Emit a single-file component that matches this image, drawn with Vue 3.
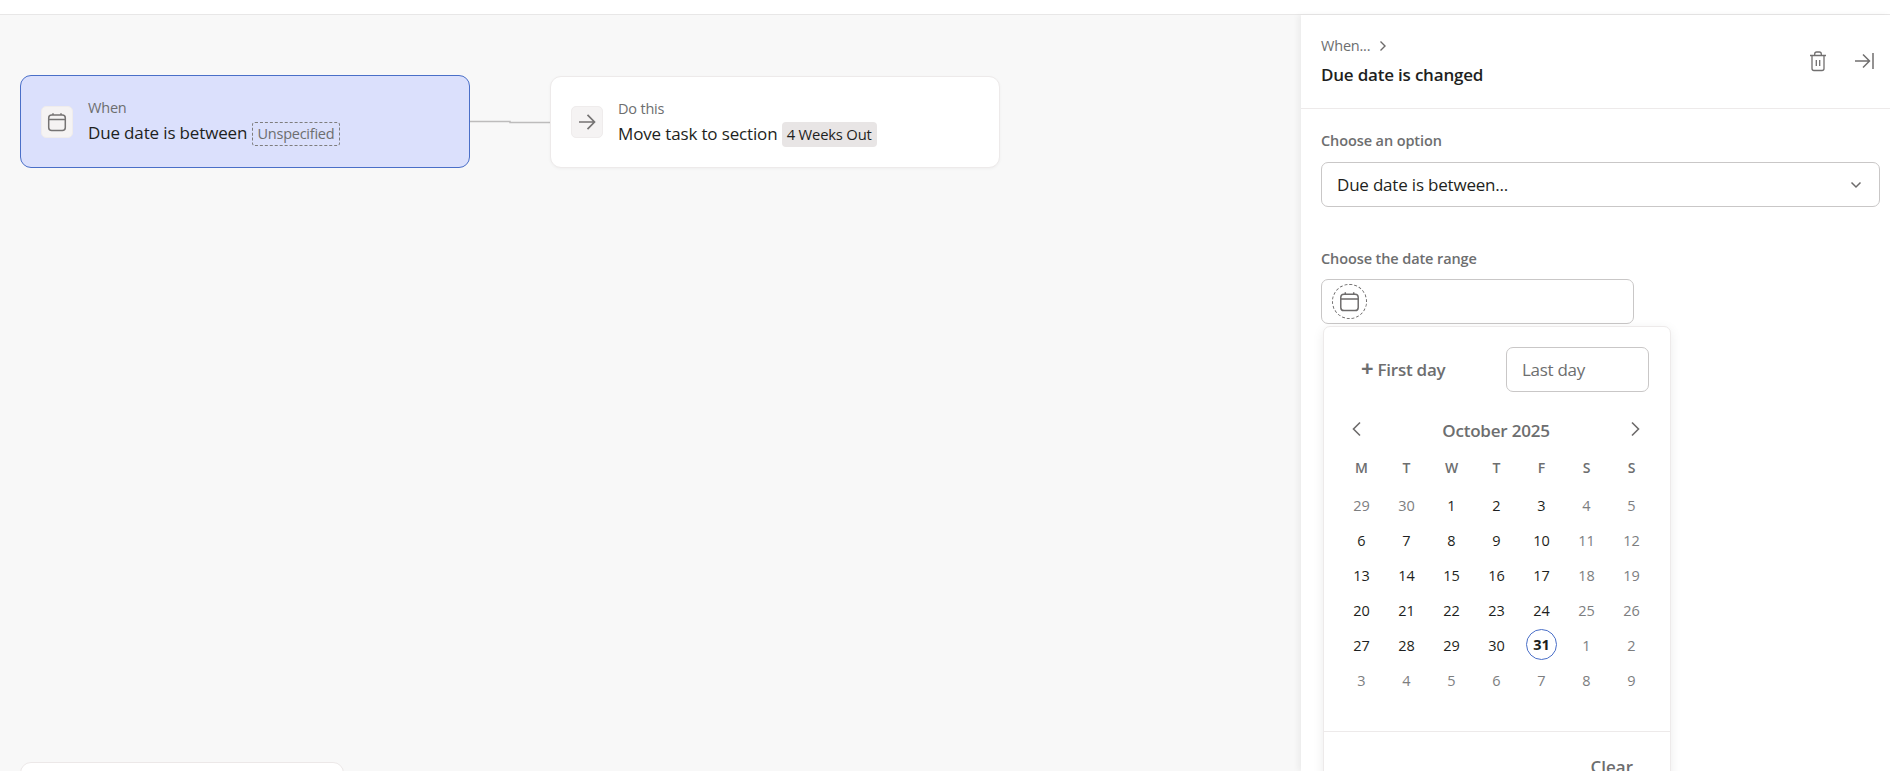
<script setup>
const weekdays = ['M', 'T', 'W', 'T', 'F', 'S', 'S']
const muted = (i) => i < 2 || i > 32 || (i + 1) % 7 === 6 || (i + 1) % 7 === 0
const seq = [29, 30, ...Array.from({ length: 31 }, (_, i) => i + 1), 1, 2, 3, 4, 5, 6, 7, 8, 9]
const days = seq.map((n, i) => ({ n, muted: muted(i), today: i === 32 }))
</script>

<template>
  <div class="page">
    <div class="topbar"></div>
    <div class="main">
      <section class="canvas">
        <svg class="wire" width="80" height="4" viewBox="0 0 80 4">
          <path d="M0 1.5H40V2.5H80" fill="none" stroke="#bdbcbc" stroke-width="1.5" />
        </svg>
        <div class="node when">
          <span class="tile">
            <svg width="20" height="20" viewBox="0 0 20 20" fill="none" stroke="#757373" stroke-width="1.5">
              <rect x="1.7" y="3" width="16.6" height="15.6" rx="3" />
              <path d="M1.7 7.6H18.3M6 1.3V3M14 1.3V3" />
            </svg>
          </span>
          <div class="node-text">
            <div class="eyebrow">When</div>
            <div class="line">Due date is between <span class="dashed">Unspecified</span></div>
          </div>
        </div>
        <div class="node action">
          <span class="tile">
            <svg width="20" height="20" viewBox="0 0 20 20" fill="none" stroke="#757373" stroke-width="1.7">
              <path d="M2 10H17.5M10.5 2.8L17.5 10L10.5 17.2" />
            </svg>
          </span>
          <div class="node-text">
            <div class="eyebrow">Do this</div>
            <div class="line">Move task to section <span class="chip">4 Weeks Out</span></div>
          </div>
        </div>
        <div class="node stub"></div>
      </section>

      <aside class="panel">
        <header class="head">
          <div>
            <div class="crumb">When...
              <svg width="10" height="12" viewBox="0 0 10 12" fill="none" stroke="#6d6b6b" stroke-width="1.4">
                <path d="M2.5 1.5L7 6L2.5 10.5" />
              </svg>
            </div>
            <div class="title">Due date is changed</div>
          </div>
          <div class="actions">
            <svg width="18" height="21" viewBox="0 0 18 21" fill="none" stroke="#716f6f" stroke-width="1.3">
              <path d="M1 4.5H17M3 4.5V17.5A2 2 0 0 0 5 19.5H13A2 2 0 0 0 15 17.5V4.5M5.7 4.5V3A2 2 0 0 1 7.7 1H10.3A2 2 0 0 1 12.3 3V4.5M7.3 9V15M10.7 9V15" />
            </svg>
            <svg width="19" height="18" viewBox="0 0 19 18" fill="none" stroke="#716f6f" stroke-width="1.5">
              <path d="M0 9H14.5M8 2.5L14.5 9L8 15.5M18 1V17" />
            </svg>
          </div>
        </header>

        <div class="body">
          <div class="label">Choose an option</div>
          <div class="select">
            <span>Due date is between...</span>
            <svg width="12" height="8" viewBox="0 0 12 8" fill="none" stroke="#6d6b6b" stroke-width="1.5">
              <path d="M1.5 1.5L6 6L10.5 1.5" />
            </svg>
          </div>

          <div class="label second">Choose the date range</div>
          <div class="date-field">
            <span class="date-ring">
              <svg width="21" height="21" viewBox="0 0 20 20" fill="none" stroke="#6d6b6b" stroke-width="1.4">
                <rect x="1.7" y="3" width="16.6" height="15.6" rx="3" />
                <path d="M1.7 7.6H18.3M6 1.3V3M14 1.3V3" />
              </svg>
            </span>
          </div>

          <div class="popover">
            <div class="range">
              <div class="first"><span class="plus">+</span> First day</div>
              <div class="last">Last day</div>
            </div>
            <div class="month">
              <svg width="12" height="16" viewBox="0 0 12 16" fill="none" stroke="#6d6b6b" stroke-width="1.6">
                <path d="M9 1.5L2.5 8L9 14.5" />
              </svg>
              <span>October 2025</span>
              <svg width="12" height="16" viewBox="0 0 12 16" fill="none" stroke="#6d6b6b" stroke-width="1.6">
                <path d="M3 1.5L9.5 8L3 14.5" />
              </svg>
            </div>
            <div class="grid">
              <div v-for="(d, i) in weekdays" :key="'w' + i" class="wd">{{ d }}</div>
              <div
                v-for="(d, i) in days"
                :key="i"
                class="day"
                :class="{ muted: d.muted, today: d.today }"
              ><span>{{ d.n }}</span></div>
            </div>
            <div class="foot"><span>Clear</span></div>
          </div>
        </div>
      </aside>
    </div>
  </div>
</template>

<style>
html, body { margin: 0; background: #fff; }
</style>

<style scoped>
.page {
  width: 1890px;
  height: 771px;
  overflow: hidden;
  display: flex;
  flex-direction: column;
  font-family: "Open Sans", "Noto Sans", sans-serif;
  color: #1e1f21;
  background: #fff;
}
.topbar {
  height: 14px;
  flex: none;
  border-bottom: 1px solid #e8e7e7;
  box-sizing: content-box;
}
.main { flex: 1; display: flex; min-height: 0; }
.canvas {
  position: relative;
  flex: 1;
  background: #f8f8f8;
}
.wire { position: absolute; left: 470px; top: 105px; }
.node {
  position: absolute;
  box-sizing: border-box;
  height: 93px;
  width: 450px;
  border-radius: 11px;
  display: flex;
  align-items: center;
  padding-left: 20px;
  gap: 15px;
}
.when { left: 20px; top: 60px; background: #dbe0fc; border: 1px solid #4a6fc8; }
.action { left: 550px; top: 61px; height: 92px; background: #fff; border: 1px solid #edeaea; box-shadow: 0 1px 3px rgba(0,0,0,.04); }
.stub { left: 20px; top: 747px; width: 324px; background: #fff; border: 1px solid #ece8e8; padding: 0; }
.tile {
  width: 32px;
  height: 32px;
  flex: none;
  border-radius: 5px;
  background: #f5f3f3;
  border: 1px solid #efecec;
  box-sizing: border-box;
  display: flex;
  align-items: center;
  justify-content: center;
}
.node-text { margin-top: 1px; }
.eyebrow { font-size: 14.5px; line-height: 19px; color: #6d6e6f; letter-spacing: -.2px; }
.line { font-size: 17px; line-height: 26px; margin-top: 3px; letter-spacing: -.15px; white-space: nowrap; }
.dashed {
  display: inline-block;
  font-size: 14.5px;
  line-height: 22px;
  color: #6d6e6f;
  border: 1px dashed #7e7d7d;
  border-radius: 3px;
  padding: 0 5px;
  letter-spacing: -.25px;
}
.chip {
  display: inline-block;
  font-size: 14.8px;
  line-height: 25px;
  background: #e8e5e5;
  border-radius: 4px;
  padding: 0 5px;
  letter-spacing: -.2px;
}
.panel {
  width: 589px;
  flex: none;
  box-sizing: border-box;
  background: #fff;
  box-shadow: -3px 0 6px rgba(0,0,0,.05);
  position: relative;
}
.head {
  height: 94px;
  box-sizing: border-box;
  border-bottom: 1px solid #edeaea;
  padding: 21px 16px 0 20px;
  display: flex;
  justify-content: space-between;
}
.crumb {
  font-size: 14.5px;
  line-height: 20px;
  color: #6d6e6f;
  letter-spacing: -.2px;
  display: flex;
  align-items: center;
  gap: 8px;
}
.title { font-size: 17px; font-weight: 600; line-height: 22px; margin-top: 8px; letter-spacing: -.2px; }
.actions { display: flex; align-items: center; gap: 28px; height: 44px; margin-top: 3px; }
.body { padding: 0 10px 0 20px; }
.label { font-size: 14.5px; font-weight: 600; line-height: 20px; color: #6d6e6f; margin-top: 22px; letter-spacing: -.1px; }
.label.second { margin-top: 42px; }
.select {
  box-sizing: border-box;
  height: 45px;
  margin-top: 11px;
  border: 1px solid #c9c7c7;
  border-radius: 7px;
  padding: 0 17px 0 15px;
  display: flex;
  align-items: center;
  justify-content: space-between;
  font-size: 17px;
  letter-spacing: -.2px;
}
.date-field {
  box-sizing: border-box;
  width: 313px;
  height: 45px;
  margin-top: 10px;
  border: 1px solid #c9c7c7;
  border-radius: 7px;
  display: flex;
  align-items: center;
  padding-left: 10px;
}
.date-ring {
  width: 35px;
  height: 35px;
  box-sizing: border-box;
  border: 1px dashed #6d6b6b;
  border-radius: 50%;
  display: flex;
  align-items: center;
  justify-content: center;
}
.popover {
  position: absolute;
  left: 22px;
  top: 311px;
  width: 348px;
  height: 500px;
  box-sizing: border-box;
  background: #fff;
  border: 1px solid #edeaea;
  border-radius: 7px;
  box-shadow: 0 3px 12px rgba(0,0,0,.08);
}
.range {
  display: flex;
  align-items: center;
  justify-content: space-between;
  padding: 20px 21px 0 37px;
}
.first { font-size: 17px; font-weight: 600; color: #6d6e6f; letter-spacing: -.25px; }
.plus { font-size: 22px; line-height: 16px; font-weight: 700; }
.last {
  box-sizing: border-box;
  width: 143px;
  height: 45px;
  border: 1px solid #c9c7c7;
  border-radius: 7px;
  display: flex;
  align-items: center;
  padding-left: 15px;
  font-size: 17px;
  color: #6d6e6f;
  letter-spacing: -.3px;
}
.month {
  display: flex;
  align-items: center;
  justify-content: space-between;
  padding: 0 29px 0 27px;
  margin-top: 26px;
  height: 24px;
  font-size: 17px;
  font-weight: 600;
  color: #6d6e6f;
  letter-spacing: -.2px;
}
.month svg { margin-top: -2px; }
.grid {
  display: grid;
  grid-template-columns: repeat(7, 45px);
  grid-auto-rows: 35px;
  padding-left: 15px;
  margin-top: 10px;
}
.wd, .day { display: flex; align-items: center; justify-content: center; }
.wd { font-size: 14px; font-weight: 600; color: #6d6e6f; height: 35px; margin-top: -2px; }
.day { font-size: 14.5px; color: #1e1f21; padding-top: 2px; }
.day.muted { color: #7d7e7f; }
.day span {
  width: 31px;
  height: 31px;
  display: flex;
  align-items: center;
  justify-content: center;
  box-sizing: border-box;
  border-radius: 50%;
}
.day.today span { border: 1px solid #4a6fc8; font-weight: 700; margin-top: -3px; }
.foot {
  margin-top: 34px;
  border-top: 1px solid #edeaea;
  padding: 23px 37px 0 0;
  text-align: right;
  font-size: 17px;
  font-weight: 600;
  color: #6d6e6f;
}
</style>
